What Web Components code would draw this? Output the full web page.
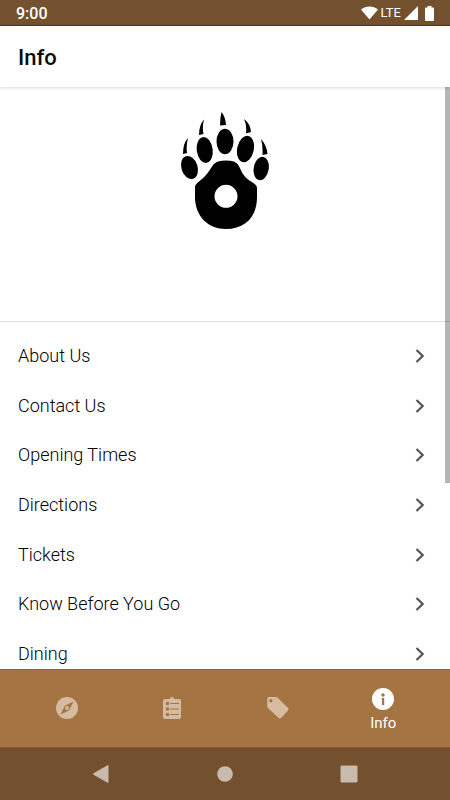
<!DOCTYPE html>
<html lang="en">
<head>
<meta charset="utf-8">
<meta name="viewport" content="width=device-width, initial-scale=1">
<title>Info</title>
<style>
html, body { height: 100%; margin: 0; }
body { font-family: Roboto, "Noto Sans", sans-serif; background: #fff; color: #111; }
</style>
</head>
<body>
<info-app></info-app>
<script>
function define(name, html) {
  const template = document.createElement('template');
  template.innerHTML = html;
  customElements.define(name, class extends HTMLElement {
    constructor() {
      super();
      this.attachShadow({ mode: 'open' }).append(template.content.cloneNode(true));
    }
  });
}

define('status-bar', `
<style>
:host { display: flex; align-items: center; justify-content: space-between; height: 25px; padding: 0 16px; background: #73512e; color: #fff; border-bottom: 1px solid #63300f; }
time { font-size: 16px; line-height: 24px; font-weight: 500; padding-top: 2px; }
.right { display: flex; align-items: center; gap: 3px; font-size: 13px; line-height: 24px; padding-top: 1px; }
svg { display: block; fill: currentColor; }
.battery { margin-left: 4px; }
</style>
<time>9:00</time>
<div class="right">
  <svg width="17" height="14" viewBox="0 0 18 14" aria-hidden="true"><path d="M0 3.200C5-1 13-1 18 3.200L9 14Z"/></svg>
  <span>LTE</span>
  <svg width="14" height="14" viewBox="0 0 14 14" aria-hidden="true"><path d="M14 0V14H0Z"/></svg>
  <svg class="battery" width="9" height="15" viewBox="0 0 9 15" aria-hidden="true"><path d="M2.500 0h4v1.500H8a1 1 0 0 1 1 1V14a1 1 0 0 1-1 1H1a1 1 0 0 1-1-1V2.500a1 1 0 0 1 1-1h1.500z"/></svg>
</div>`);

define('page-header', `
<style>
:host { display: flex; align-items: center; height: 61px; padding: 2px 18px 0; box-sizing: border-box; background: #fff; box-shadow: 0 1px 3px rgba(0,0,0,.15); z-index: 1; }
h1 { margin: 0; font-size: 22px; line-height: 28px; font-weight: 500; color: #0c0c0c; }
</style>
<h1><slot></slot></h1>`);

define('paw-banner', `
<style>
:host { display: flex; justify-content: center; height: 209px; padding-top: 25px; border-bottom: 1px solid #dedede; }
svg { display: block; }
</style>
<svg width="110" height="128" viewBox="0 12 110 128" role="img" aria-label="Bear paw">
  <path d="M51.500 12Q55.500 17 56 25L50 25.500Q50 18 51.500 12ZM34 19.500Q32 27 33.500 34L29 35Q29 25 34 19.500ZM74 19Q80.500 24 81 32L76 33.500Q77 25 74 19ZM18 38Q16 46 17 53L13 54Q13 43 18 38ZM91 39Q97 46 97.500 54L92.500 55Q93 46 91 39Z"/>
  <ellipse cx="55" cy="41.500" rx="8.500" ry="12.800"/>
  <ellipse cx="34.700" cy="50" rx="8" ry="13" transform="rotate(-8 34.700 50)"/>
  <ellipse cx="75.500" cy="49" rx="8.300" ry="13.300" transform="rotate(12 75.500 49)"/>
  <ellipse cx="19.500" cy="67.500" rx="8.100" ry="11.800" transform="rotate(-18 19.500 67.500)"/>
  <ellipse cx="91.200" cy="68.500" rx="7.500" ry="11.800" transform="rotate(10 91.200 68.500)"/>
  <path fill-rule="evenodd" d="M48 61.500C53 60 59 60 64 61.500C70 64 70 71 74.500 76C79 82 87 83 87 88V97C87 118 74 129 56 129C38 129 25 116 25 97V87C25 83 32 80 36 75C41 70 42 63.500 48 61.500ZM67.500 96.300A11.500 11.500 0 1 0 44.500 96.300A11.500 11.500 0 1 0 67.500 96.300Z"/>
</svg>`);

define('link-row', `
<style>
:host { display: block; flex: 1 0 48px; }
a { display: flex; height: 100%; align-items: center; justify-content: space-between; padding: 0 25px 0 18px; color: #000; text-decoration: none; font-size: 18px; font-weight: 300; line-height: 24px; }
svg { display: block; }
</style>
<a href="#"><slot></slot><svg width="10" height="14" viewBox="0 0 10 14" fill="none" stroke="#555" stroke-width="2.200" aria-hidden="true"><path d="M1.500 1 7.700 7 1.500 13"/></svg></a>`);

define('nav-tab', `
<style>
:host { display: flex; flex: 1; color: #d5bba1; padding-bottom: 2px; }
:host([active]) { color: #fff; padding: 2px 0 0; }
button { flex: 1; display: flex; flex-direction: column; align-items: center; justify-content: center; gap: 5px; padding: 0; border: 0; background: none; color: inherit; font: inherit; font-size: 15px; line-height: 16px; }
</style>
<button type="button"><slot name="icon"></slot><slot></slot></button>`);

define('tab-bar', `
<style>
:host { display: flex; height: 77px; padding: 0 14px; background: #a47542; border-top: 1px solid #966520; z-index: 1; }
svg { display: block; fill: currentColor; }
.cut { fill: #a47542; }
.line { stroke: #a47542; }
</style>
<nav-tab><svg slot="icon" width="22" height="22" viewBox="0 0 22 22" role="img" aria-label="Explore"><circle cx="11" cy="11" r="11"/><path class="cut" d="M17.500 4.500 13.200 13.200 4.500 17.500 8.800 8.800Z"/><circle cx="11" cy="11" r="1.900"/></svg></nav-tab>
<nav-tab><svg slot="icon" width="18" height="22" viewBox="0 0 18 22" role="img" aria-label="Schedule"><path d="M2 2H7a2 2 0 0 1 4 0h5a2 2 0 0 1 2 2V20a2 2 0 0 1-2 2H2a2 2 0 0 1-2-2V4a2 2 0 0 1 2-2Z"/><g class="cut"><circle cx="4.500" cy="6.500" r="1.800"/><circle cx="4.500" cy="12" r="1.800"/><circle cx="4.500" cy="17.500" r="1.800"/></g><path class="line" d="M7.500 6.500H16M7.500 12H16M7.500 17.500H16"/></svg></nav-tab>
<nav-tab><svg slot="icon" width="22" height="22" viewBox="0 0 22 22" role="img" aria-label="Offers"><path fill-rule="evenodd" d="M2.200 0H8.500Q10 0 11 1L20.800 10.800Q22.200 12.300 20.800 13.800L14.300 20.800Q13 22.200 11.500 20.800L1.200 11.300Q.2 10.300.2 9V2Q.2 0 2.200 0ZM5.500 3.800A1.700 1.700 0 1 0 2.100 3.800A1.700 1.700 0 1 0 5.500 3.800Z"/></svg></nav-tab>
<nav-tab active><svg slot="icon" width="22" height="22" viewBox="0 0 22 22" aria-hidden="true"><circle cx="11" cy="11" r="11"/><circle class="cut" cx="11" cy="7" r="1.700"/><path class="cut" d="M9.600 10H12.200V17H10V11H9.600Z"/></svg>Info</nav-tab>`);

define('system-nav', `
<style>
:host { display: flex; justify-content: center; height: 52px; background: #73512e; border-top: 1px solid #875c31; z-index: 1; }
button { width: 124px; padding: 0; border: 0; background: none; display: flex; align-items: center; justify-content: center; }
svg { display: block; fill: #c8baac; }
</style>
<button type="button" aria-label="Back"><svg width="18" height="18" viewBox="0 0 18 18"><path d="M15.500.2Q16.500-.2 16.500 1V17Q16.500 18.200 15.500 17.800L1.500 9.700Q.5 9 1.500 8.300Z"/></svg></button>
<button type="button" aria-label="Home"><svg width="16" height="16" viewBox="0 0 16 16"><circle cx="8" cy="8" r="7.800"/></svg></button>
<button type="button" aria-label="Recent apps"><svg width="18" height="18" viewBox="0 0 18 18"><rect x=".5" y=".5" width="17" height="17" rx="1.300"/></svg></button>`);

define('info-app', `
<style>
:host { display: flex; flex-direction: column; height: 100vh; }
main { flex: 1; min-height: 0; position: relative; display: flex; flex-direction: column; overflow: hidden; }
paw-banner { flex: none; }
nav { flex: 1; display: flex; flex-direction: column; padding-top: 9px; margin-bottom: -10px; }
.scroll { position: absolute; top: 0; right: 0; width: 5px; height: 68%; background: rgba(0,0,0,.29); }
</style>
<status-bar></status-bar>
<page-header>Info</page-header>
<main>
  <paw-banner></paw-banner>
  <nav>
    <link-row>About Us</link-row>
    <link-row>Contact Us</link-row>
    <link-row>Opening Times</link-row>
    <link-row>Directions</link-row>
    <link-row>Tickets</link-row>
    <link-row>Know Before You Go</link-row>
    <link-row>Dining</link-row>
  </nav>
  <div class="scroll"></div>
</main>
<tab-bar></tab-bar>
<system-nav></system-nav>`);
</script>
</body>
</html>
